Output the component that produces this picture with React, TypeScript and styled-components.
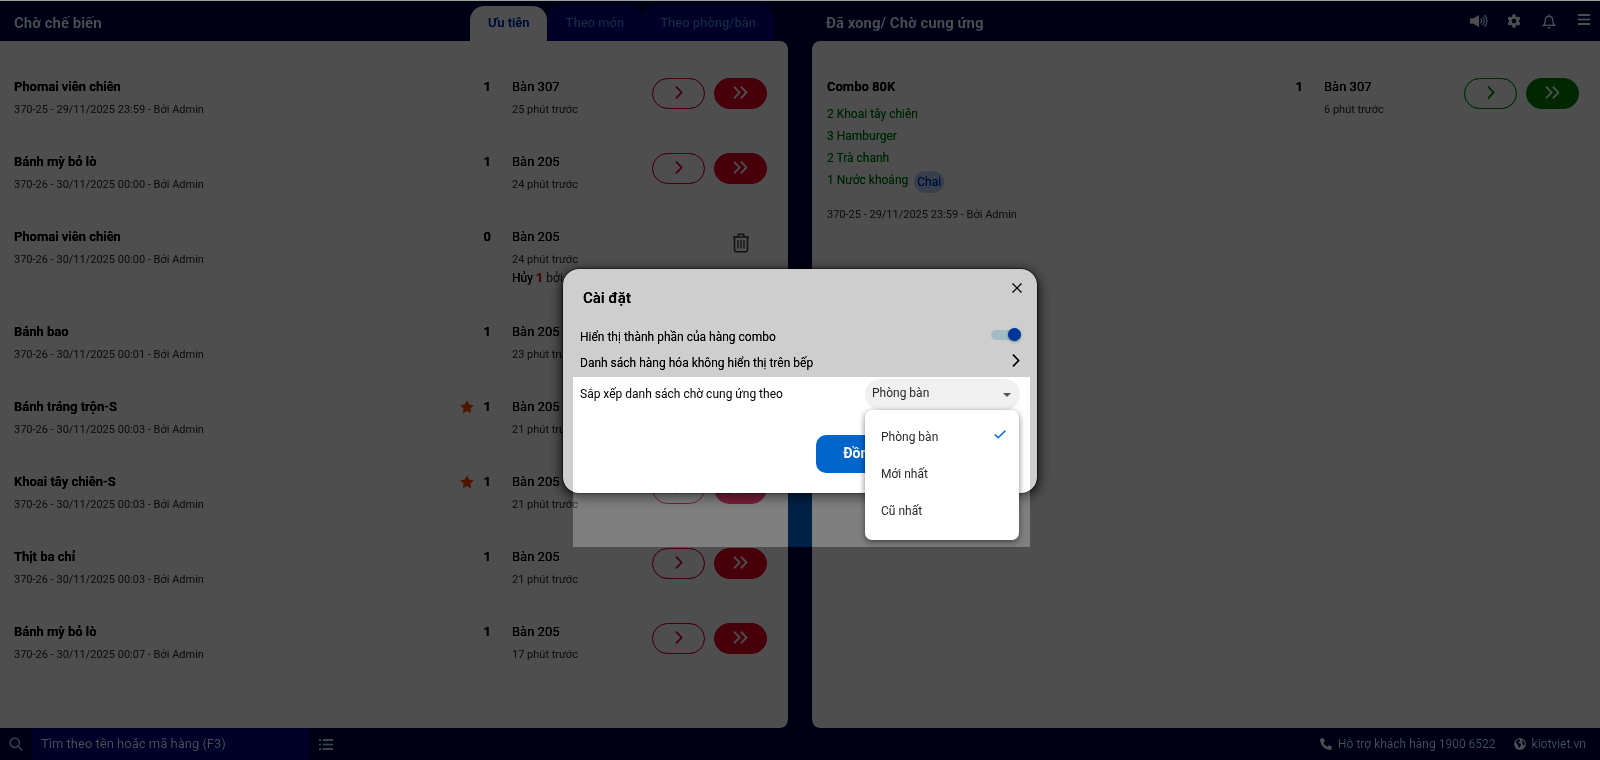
import React from 'react';
import styled, { createGlobalStyle } from 'styled-components';

const GlobalStyle = createGlobalStyle`
  *, *::before, *::after { box-sizing: border-box; }
  body {
    margin: 0;
    font-family: Roboto, "Liberation Sans", sans-serif;
    font-size: 13px;
    line-height: 18px;
    color: #000;
    background: #00408c;
  }
  button, input, select { font: inherit; }
  button { cursor: pointer; }
`;

const tone = {
  navy: '#00408c',
  blue: '#0050b4',
  red: '#f03c74',
  green: '#20b040',
  greenText: '#18a040',
  primary: '#0066cc',
  muted: '#747a80',
};

const Page = styled.div`
  min-height: 100vh;
  display: flex;
  flex-direction: column;
  background: ${tone.navy};
  border-top: 1px solid #d1d1d1;
`;

const Board = styled.div`
  flex: 1;
  display: grid;
  grid-template-columns: minmax(0, 1fr) minmax(0, 1fr);
  column-gap: 24px;
`;

const Column = styled.section`
  display: flex;
  flex-direction: column;
`;

const ColumnHeader = styled.header`
  height: 40px;
  padding: 0 14px;
  display: flex;
  align-items: center;
  justify-content: space-between;
`;

const ColumnTitle = styled.h1`
  margin: 0;
  padding-top: 4px;
  font-size: 15px;
  line-height: 20px;
  font-weight: 700;
  color: #fff;
`;

const Tabs = styled.nav`
  align-self: flex-end;
  display: flex;
`;

const Tab = styled.button<{ $active?: boolean }>`
  height: 35px;
  padding: 0 18px 2px;
  border: 0;
  border-radius: 14px 14px 0 0;
  font-weight: 500;
  color: ${p => (p.$active ? tone.primary : '#98b8dc')};
  background: ${p => (p.$active ? '#fff' : tone.blue)};
`;

const Tools = styled.div`
  display: flex;
  align-items: center;
  gap: 17px;
  margin-right: -7px;
`;

const Tool = styled.button<{ $raised?: boolean }>`
  width: 18px;
  height: 18px;
  padding: 0;
  border: 0;
  background: none;
  color: #fff;
  display: flex;
  align-items: center;
  justify-content: center;
  margin-bottom: ${p => (p.$raised ? 4 : 0)}px;
`;

const Panel = styled.ul<{ $side: 'left' | 'right' }>`
  flex: 1;
  margin: 0;
  padding: 27px 21px 0 ${p => (p.$side === 'left' ? 14 : 15)}px;
  list-style: none;
  background: #fff;
  border-radius: ${p => (p.$side === 'left' ? '0 8px 8px 0' : '8px 0 0 8px')};
`;

const Row = styled.li<{ $tall?: boolean }>`
  height: ${p => (p.$tall ? 95 : 75)}px;
  padding-top: 10px;
  display: grid;
  grid-template-columns: minmax(0, 1fr) 140px 115px;
`;

const Main = styled.div`
  display: flex;
  justify-content: space-between;
  padding-right: 21px;
`;

const Name = styled.div`
  font-weight: 600;
`;

const Meta = styled.div`
  margin-top: 5px;
  font-size: 11px;
  color: ${tone.muted};
`;

const Quantity = styled.div`
  display: flex;
  align-items: flex-start;
  gap: 10px;
  font-weight: 600;
  svg { margin-top: 2px; }
`;

const Place = styled.div``;

const Cancelled = styled.div`
  font-size: 12px;
  white-space: nowrap;
  span { color: ${tone.muted}; }
  strong { color: #ff2048; font-size: 13px; }
`;

const Actions = styled.div`
  display: flex;
  align-items: flex-start;
  justify-content: flex-end;
  gap: 9px;
`;

const Pill = styled.button<{ $tone: string; $solid?: boolean }>`
  width: 53px;
  height: 31px;
  padding: 0 0 3px;
  display: flex;
  align-items: center;
  justify-content: center;
  border: 1px solid ${p => p.$tone};
  border-radius: 16px;
  background: ${p => (p.$solid ? p.$tone : 'transparent')};
  color: ${p => (p.$solid ? '#fff' : p.$tone)};
`;

const TrashButton = styled.button`
  width: 53px;
  height: 31px;
  padding: 0 0 2px;
  display: flex;
  align-items: center;
  justify-content: center;
  border: 0;
  background: none;
  color: #85898e;
`;

const Parts = styled.ul`
  margin: 7px 0 15px;
  padding: 0;
  list-style: none;
  font-size: 12px;
  line-height: 22px;
  color: ${tone.greenText};
  li { height: 22px; display: flex; align-items: center; gap: 6px; }
`;

const Unit = styled.span`
  padding: 0 3px;
  margin-top: 3px;
  border-radius: 11px;
  background: #d2e2fa;
  color: ${tone.primary};
`;

const BottomBar = styled.footer`
  height: 32px;
  display: flex;
  align-items: center;
  color: #e2e8ee;
`;

const SearchLabel = styled.label`
  width: 32px;
  display: flex;
  justify-content: center;
`;

const SearchInput = styled.input`
  width: 277px;
  height: 32px;
  padding: 0 9px 2px;
  border: 0;
  background: ${tone.blue};
  color: #fff;
  &::placeholder { color: #fff; opacity: 1; }
`;

const ListButton = styled.button`
  width: 34px;
  height: 32px;
  padding: 0;
  border: 0;
  background: none;
  color: inherit;
  display: flex;
  align-items: center;
  justify-content: center;
`;

const Support = styled.div`
  margin-left: auto;
  padding: 0 14px 0 0;
  display: flex;
  gap: 18px;
  font-size: 12px;
`;

const SupportLink = styled.a`
  display: flex;
  align-items: center;
  gap: 6px;
  color: #fff;
  text-decoration: none;
`;

const Backdrop = styled.div`
  position: fixed;
  inset: 1px 0 0;
  display: flex;
  align-items: center;
  justify-content: center;
  background: rgba(0, 0, 0, 0.5);
`;

const Dialog = styled.div`
  position: relative;
  width: 474px;
  padding: 18px 17px 20px;
  border-radius: 16px;
  background: #fff;
  box-shadow: 0 3px 14px rgba(0, 0, 0, 0.6), 0 0 2px rgba(0, 0, 0, 0.8);
`;

const DialogTitle = styled.h2`
  margin: 0 0 15px;
  padding-left: 3px;
  font-size: 15px;
  line-height: 22px;
  font-weight: 600;
`;

const CloseButton = styled.button`
  position: absolute;
  top: 10px;
  right: 11px;
  width: 18px;
  height: 18px;
  padding: 0;
  border: 0;
  background: none;
  display: flex;
  align-items: center;
  justify-content: center;
`;

const Setting = styled.div<{ $roomy?: boolean }>`
  height: ${p => (p.$roomy ? 32 : 26)}px;
  margin-top: ${p => (p.$roomy ? 3 : 0)}px;
  font-size: 12px;
  display: flex;
  align-items: center;
  justify-content: space-between;
  label { padding-bottom: ${p => (p.$roomy ? 2 : 0)}px; }
`;

const Toggle = styled.input`
  appearance: none;
  position: relative;
  width: 30px;
  height: 13px;
  margin: 0 -1px 5px 0;
  &::before {
    content: '';
    position: absolute;
    inset: 2px 1px 1px 0;
    border-radius: 5px;
    background: #d1edf6;
  }
  &::after {
    content: '';
    position: absolute;
    top: 0;
    right: 0;
    width: 13px;
    height: 13px;
    border-radius: 50%;
    background: ${tone.primary};
    box-shadow: 0 1px 3px rgba(0, 0, 0, 0.3);
  }
`;

const OpenButton = styled.button`
  width: 8px;
  height: 18px;
  margin-bottom: 5px;
  padding: 0;
  border: 0;
  background: none;
  color: #222;
  display: flex;
  align-items: center;
  justify-content: center;
`;

const SelectWrap = styled.div`
  position: relative;
  width: 155px;
`;

const SortSelect = styled.select`
  appearance: none;
  display: block;
  width: 100%;
  height: 31px;
  padding: 0 7px 3px;
  border: 0;
  border-radius: 16px;
  background: #f0f0f0;
  color: #26292c;
`;

const Caret = styled.span`
  position: absolute;
  top: 14px;
  right: 9px;
  border: 4px solid transparent;
  border-top-color: #555;
  border-bottom: 0;
  pointer-events: none;
`;

const Menu = styled.ul`
  position: absolute;
  top: 31px;
  left: 0;
  right: 1px;
  margin: 0;
  padding: 9px 0 10px;
  list-style: none;
  border-radius: 7px;
  background: #fff;
  box-shadow: 0 2px 6px rgba(0, 0, 0, 0.5);
  z-index: 2;
`;

const Option = styled.li`
  height: 37px;
  padding: 0 13px 1px 16px;
  display: flex;
  align-items: center;
  justify-content: space-between;
  color: #26292c;
  svg { margin-bottom: 5px; }
`;

const DialogFooter = styled.div`
  display: flex;
  justify-content: flex-end;
  padding: 24px 106px 0 0;
`;

const Confirm = styled.button`
  width: 98px;
  height: 38px;
  padding: 0 0 2px;
  border: 0;
  border-radius: 10px;
  background: ${tone.primary};
  color: #fff;
  font-size: 14px;
  font-weight: 700;
`;

/* Dims everything except the sorting option, evenly lowering each channel. */
const Spotlight = styled.div`
  position: fixed;
  inset: 0;
  pointer-events: none;
  backdrop-filter: brightness(0.7225) contrast(1.384);
  clip-path: polygon(
    evenodd,
    0 0, 100% 0, 100% 100%, 0 100%, 0 0,
    calc(50% - 227px) calc(50% - 3px),
    calc(50% + 230px) calc(50% - 3px),
    calc(50% + 230px) calc(50% + 167px),
    calc(50% - 227px) calc(50% + 167px),
    calc(50% - 227px) calc(50% - 3px)
  );
`;

const Chevron = ({ double }: { double?: boolean }) => (
  <svg width={double ? 15 : 8} height="13" viewBox={double ? '0 0 15 13' : '0 0 8 13'} fill="none" stroke="currentColor" strokeWidth={double ? 2 : 1.6}>
    <path d="M1 .6l5.600 5.900L1 12.400" />
    {double && <path d="M7.800 .6l5.600 5.900-5.600 5.900" />}
  </svg>
);

const Star = () => (
  <svg width="14" height="14" viewBox="0 0 14 14" fill="#ff8a2c">
    <path d="M7 .2l2.100 4.300 4.700.7-3.400 3.300.8 4.800L7 11l-4.200 2.300.8-4.800L.2 5.200l4.700-.7z" />
  </svg>
);

const Trash = () => (
  <svg width="18" height="20" viewBox="0 0 18 20" fill="none" stroke="currentColor" strokeWidth="1.600">
    <path d="M1 4h16M5.500 4l1.200-2.700h4.600L12.500 4M2.500 4v12.500c0 1.500.7 2.300 2 2.300h9c1.300 0 2-.8 2-2.300V4" />
    <path d="M6 7v8.500M9 7v8.500M12 7v8.500" strokeWidth="1.300" />
  </svg>
);

const Speaker = () => (
  <svg width="18" height="14" viewBox="0 0 18 14" fill="currentColor">
    <path d="M0 4.200h3.500L9 .8v12.400L3.500 9.800H0z" />
    <g fill="none" stroke="currentColor" strokeWidth="1.400" strokeLinecap="round">
      <path d="M10.800 5.100c1 1 1 2.800 0 3.800M12.800 3.300c2 2 2 5.400 0 7.400M14.700 1.500c3 3 3 8 0 11" />
    </g>
  </svg>
);

const Gear = () => (
  <svg width="16" height="16" viewBox="0 0 24 24" fill="currentColor">
    <path d="M19.400 13c0-.3.1-.6.1-1s0-.7-.1-1l2.100-1.600c.2-.2.200-.4.100-.6l-2-3.500c-.1-.2-.4-.3-.6-.2l-2.500 1c-.5-.4-1.100-.7-1.700-1L14.400 2.400c0-.2-.2-.4-.5-.4h-4c-.2 0-.4.200-.5.400L9.100 5.100c-.6.3-1.200.6-1.700 1l-2.500-1c-.2-.1-.5 0-.6.200l-2 3.500c-.1.2-.1.500.1.600L4.500 11c0 .3-.1.700-.1 1s0 .7.1 1l-2.100 1.600c-.2.2-.2.400-.1.600l2 3.500c.1.200.4.300.6.200l2.500-1c.5.4 1.100.7 1.700 1l.4 2.700c0 .2.200.4.500.4h4c.2 0 .5-.2.500-.4l.4-2.700c.6-.3 1.200-.6 1.700-1l2.500 1c.2.1.5 0 .6-.2l2-3.500c.1-.2.1-.5-.1-.6zM12 15.500a3.500 3.500 0 1 1 0-7 3.500 3.500 0 0 1 0 7z" />
  </svg>
);

const Bell = () => (
  <svg width="14" height="15" viewBox="0 0 14 15" fill="none" stroke="currentColor" strokeWidth="1.500">
    <path d="M7 .3v1.700M1.500 11.300h11c-1.300-1-1.700-2.200-1.700-4.800C10.800 4 9.300 2.200 7 2.200S3.200 4 3.200 6.500c0 2.600-.4 3.800-1.700 4.800z" />
    <path d="M5.300 13a1.700 1.700 0 0 0 3.400 0z" fill="currentColor" stroke="none" />
  </svg>
);

const Bars = () => (
  <svg width="12" height="11" viewBox="0 0 12 11" fill="currentColor">
    <path d="M0 0h12v2H0zM0 4.500h12v2H0zM0 9h12v2H0z" />
  </svg>
);

const Lens = () => (
  <svg width="14" height="14" viewBox="0 0 14 14" fill="none" stroke="currentColor" strokeWidth="1.700">
    <circle cx="5.700" cy="5.700" r="4.600" />
    <path d="M9 9l4.300 4.300" />
  </svg>
);

const ListIcon = () => (
  <svg width="14" height="11" viewBox="0 0 14 11" fill="currentColor">
    <path d="M0 0h2v2H0zM0 4.500h2v2H0zM0 9h2v2H0zM3.500 0H14v2H3.500zM3.500 4.500H14v2H3.500zM3.500 9H14v2H3.500z" />
  </svg>
);

const Phone = () => (
  <svg width="12" height="12" viewBox="0 0 512 512" fill="currentColor">
    <path d="M164.900 24.600c-7.700-18.600-28-28.500-47.400-23.200l-88 24C12.100 30.200 0 46 0 64c0 247.400 200.600 448 448 448 18 0 33.800-12.100 38.600-29.500l24-88c5.300-19.400-4.600-39.700-23.200-47.400l-96-40c-16.300-6.800-35.200-2.100-46.300 11.600L304.700 368C234.300 334.700 177.300 277.700 144 207.300l49.300-40.300c13.700-11.200 18.400-30 11.600-46.300z" />
  </svg>
);

const Globe = () => (
  <svg width="12" height="12" viewBox="0 0 12 12">
    <circle cx="6" cy="6" r="6" fill="currentColor" />
    <path d="M2 3.200l2-1.700 2 .3-.4 1.600-1.500.9 1 1.200 1.500.3.400 1.400-1.300 1.200-.2 1.700-1-1.300-.2-1.900L2.500 5.400zM8 1.900l2 1.700.9 2.300-.8 1.400-1-.4L8.200 5.400l.6-1.300z" fill={tone.navy} />
  </svg>
);

type Order = {
  name: string;
  code: string;
  qty: number;
  place: string;
  ago: string;
  star?: boolean;
  cancelled?: boolean;
};

const orders: Order[] = [
  { name: 'Phomai viên chiên', code: '370-25 - 29/11/2025 23:59', qty: 1, place: 'Bàn 307', ago: '25 phút trước' },
  { name: 'Bánh mỳ bỏ lò', code: '370-26 - 30/11/2025 00:00', qty: 1, place: 'Bàn 205', ago: '24 phút trước' },
  { name: 'Phomai viên chiên', code: '370-26 - 30/11/2025 00:00', qty: 0, place: 'Bàn 205', ago: '24 phút trước', cancelled: true },
  { name: 'Bánh bao', code: '370-26 - 30/11/2025 00:01', qty: 1, place: 'Bàn 205', ago: '23 phút trước' },
  { name: 'Bánh tráng trộn-S', code: '370-26 - 30/11/2025 00:03', qty: 1, place: 'Bàn 205', ago: '21 phút trước', star: true },
  { name: 'Khoai tây chiên-S', code: '370-26 - 30/11/2025 00:03', qty: 1, place: 'Bàn 205', ago: '21 phút trước', star: true },
  { name: 'Thịt ba chỉ', code: '370-26 - 30/11/2025 00:03', qty: 1, place: 'Bàn 205', ago: '21 phút trước' },
  { name: 'Bánh mỳ bỏ lò', code: '370-26 - 30/11/2025 00:07', qty: 1, place: 'Bàn 205', ago: '17 phút trước' },
];

const comboParts = ['2 Khoai tây chiên', '3 Hamburger', '2 Trà chanh', '1 Nước khoáng'];
const sortOptions = ['Phòng bàn', 'Mới nhất', 'Cũ nhất'];

const PillPair = ({ color }: { color: string }) => (
  <Actions>
    <Pill $tone={color} aria-label="Chuyển một"><Chevron /></Pill>
    <Pill $tone={color} $solid aria-label="Chuyển tất cả"><Chevron double /></Pill>
  </Actions>
);

const OrderRow = ({ order }: { order: Order }) => (
  <Row $tall={order.cancelled}>
    <Main>
      <div>
        <Name>{order.name}</Name>
        <Meta>{order.code} - Bởi Admin</Meta>
      </div>
      <Quantity>
        {order.star && <Star />}
        {order.qty}
      </Quantity>
    </Main>
    <div>
      <Place>{order.place}</Place>
      <Meta>{order.ago}</Meta>
      {order.cancelled && <Cancelled>Hủy <strong>1</strong> <span>bởi</span></Cancelled>}
    </div>
    {order.cancelled ? (
      <Actions><TrashButton aria-label="Xóa"><Trash /></TrashButton></Actions>
    ) : (
      <PillPair color={tone.red} />
    )}
  </Row>
);

export default function App() {
  return (
    <>
      <GlobalStyle />
      <Page>
        <Board>
          <Column>
            <ColumnHeader>
              <ColumnTitle>Chờ chế biến</ColumnTitle>
              <Tabs>
                <Tab $active>Ưu tiên</Tab>
                <Tab>Theo món</Tab>
                <Tab>Theo phòng/bàn</Tab>
              </Tabs>
            </ColumnHeader>
            <Panel $side="left">
              {orders.map((order, i) => <OrderRow key={i} order={order} />)}
            </Panel>
          </Column>
          <Column>
            <ColumnHeader>
              <ColumnTitle>Đã xong/ Chờ cung ứng</ColumnTitle>
              <Tools>
                <Tool aria-label="Âm thanh"><Speaker /></Tool>
                <Tool aria-label="Cài đặt"><Gear /></Tool>
                <Tool aria-label="Thông báo"><Bell /></Tool>
                <Tool $raised aria-label="Menu"><Bars /></Tool>
              </Tools>
            </ColumnHeader>
            <Panel $side="right">
              <Row>
                <Main>
                  <div>
                    <Name>Combo 80K</Name>
                    <Parts>
                      {comboParts.map((part, i) => (
                        <li key={part}>{part}{i === 3 && <Unit>Chai</Unit>}</li>
                      ))}
                    </Parts>
                    <Meta>370-25 - 29/11/2025 23:59 - Bởi Admin</Meta>
                  </div>
                  <Quantity>1</Quantity>
                </Main>
                <div>
                  <Place>Bàn 307</Place>
                  <Meta>6 phút trước</Meta>
                </div>
                <PillPair color={tone.green} />
              </Row>
            </Panel>
          </Column>
        </Board>
        <BottomBar>
          <SearchLabel htmlFor="search" aria-label="Tìm kiếm"><Lens /></SearchLabel>
          <SearchInput id="search" placeholder="Tìm theo tên hoặc mã hàng (F3)" />
          <ListButton aria-label="Danh sách"><ListIcon /></ListButton>
          <Support>
            <SupportLink href="tel:19006522"><Phone />Hỗ trợ khách hàng 1900 6522</SupportLink>
            <SupportLink href="#kiotviet"><Globe />kiotviet.vn</SupportLink>
          </Support>
        </BottomBar>
      </Page>
      <Backdrop>
        <Dialog role="dialog" aria-labelledby="settings-title">
          <DialogTitle id="settings-title">Cài đặt</DialogTitle>
          <CloseButton aria-label="Đóng">
            <svg width="10" height="10" viewBox="0 0 10 10" stroke="#222" strokeWidth="1.200"><path d="M.5.5l9 9M9.500.5l-9 9" /></svg>
          </CloseButton>
          <Setting>
            <label htmlFor="combo">Hiển thị thành phần của hàng combo</label>
            <Toggle id="combo" type="checkbox" defaultChecked />
          </Setting>
          <Setting>
            <span>Danh sách hàng hóa không hiển thị trên bếp</span>
            <OpenButton aria-label="Mở danh sách"><Chevron /></OpenButton>
          </Setting>
          <Setting $roomy>
            <label htmlFor="sort">Sắp xếp danh sách chờ cung ứng theo</label>
            <SelectWrap>
              <SortSelect id="sort" defaultValue={sortOptions[0]}>
                {sortOptions.map(o => <option key={o}>{o}</option>)}
              </SortSelect>
              <Caret />
              <Menu role="listbox">
                {sortOptions.map((o, i) => (
                  <Option key={o} role="option" aria-selected={i === 0}>
                    {o}
                    {i === 0 && (
                      <svg width="12" height="9" viewBox="0 0 12 9" fill="none" stroke={tone.primary} strokeWidth="1.500"><path d="M.7 4.500l3.500 3.300L11.300.8" /></svg>
                    )}
                  </Option>
                ))}
              </Menu>
            </SelectWrap>
          </Setting>
          <DialogFooter><Confirm>Đồng ý</Confirm></DialogFooter>
        </Dialog>
      </Backdrop>
      <Spotlight />
    </>
  );
}
